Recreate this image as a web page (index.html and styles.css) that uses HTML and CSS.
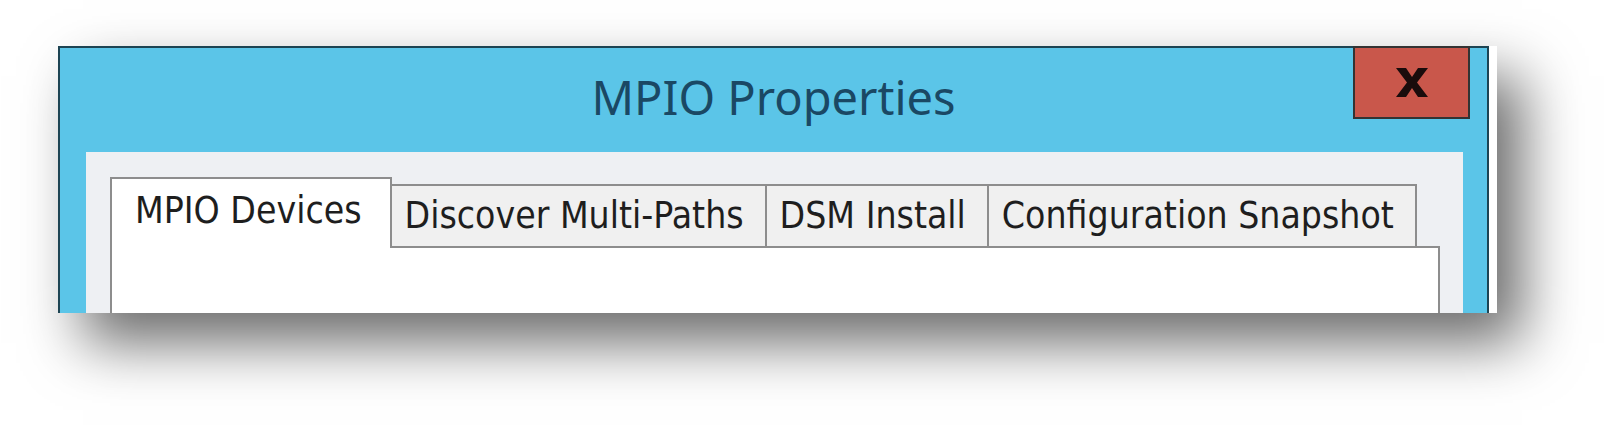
FILE: index.html
```html
<!DOCTYPE html>
<html lang="en">
<head>
    <meta charset="UTF-8">
    <meta name="viewport" content="width=device-width, initial-scale=1.0">
    <title>MPIO Properties</title>
    <link rel="stylesheet" href="styles.css">
</head>
<body>
    <div class="page">
        <div class="shot">
            <div class="window">
                <div class="titlebar">
                    MPIO Properties
                    <div class="close">
                        <svg width="32" height="29" viewBox="0 0 32 29">
                            <polygon points="0,0 10,0 16,9 22,0 32,0 21,14.5 32,29 22,29 16,20 10,29 0,29 11,14.5" fill="#1a0c0c"/>
                        </svg>
                    </div>
                </div>
                <div class="panel">
                    <div class="tabs">
                        <div class="tab active">MPIO Devices</div>
                        <div class="tab">Discover Multi-Paths</div>
                        <div class="tab">DSM Install</div>
                        <div class="tab">Configuration Snapshot</div>
                    </div>
                    <div class="tab-body"></div>
                </div>
            </div>
        </div>
    </div>
</body>
</html>
```

FILE: styles.css
```css
body, html {
    height: 100%;
    margin: 0;
    background: #ffffff;
}
.page {
    height: 100%;
    box-sizing: border-box;
    padding: 46px 0 0 58px;
}
.shot {
    width: 1439px;
    height: 267px;
    overflow: hidden;
    background: #ffffff;
    box-shadow: 25px 30px 55px rgba(0,0,0,0.58);
}
.window {
    width: 1427px;
    height: 400px;
    border: 2px solid #1d4453;
    background: #5bc5e8;
}
.titlebar {
    position: relative;
    height: 98px;
    padding-bottom: 6px;
    line-height: 98px;
    text-align: center;
    font-family: "Noto Sans", sans-serif;
    font-size: 47px;
    color: #1a4864;
}
.close {
    position: absolute;
    top: -2px;
    right: 17px;
    width: 113px;
    height: 69px;
    border: 2px solid #333333;
    background: #c9574b;
    display: flex;
    justify-content: center;
    align-items: center;
}
.close svg {
    display: block;
}
.panel {
    margin: 0 24px 0 26px;
    height: 300px;
    padding: 25px 23px 0 24px;
    background: #eef0f3;
}
.tabs {
    display: flex;
    align-items: flex-end;
}
.tab {
    height: 60px;
    line-height: 60px;
    padding: 0 21px 0 13px;
    border-top: 2px solid #8d8d8d;
    border-right: 2px solid #8d8d8d;
    background: #f0f0f0;
    font-family: "DejaVu Sans Condensed", "DejaVu Sans", sans-serif;
    font-stretch: condensed;
    font-size: 37px;
    color: #1e1e1e;
    white-space: nowrap;
}
.tab.active {
    height: 62px;
    padding: 2px 28px 5px 23px;
    margin-bottom: -2px;
    border-left: 2px solid #8d8d8d;
    background: #ffffff;
    position: relative;
}
.tab-body {
    height: 200px;
    border: 2px solid #8d8d8d;
    background: #ffffff;
}
```
